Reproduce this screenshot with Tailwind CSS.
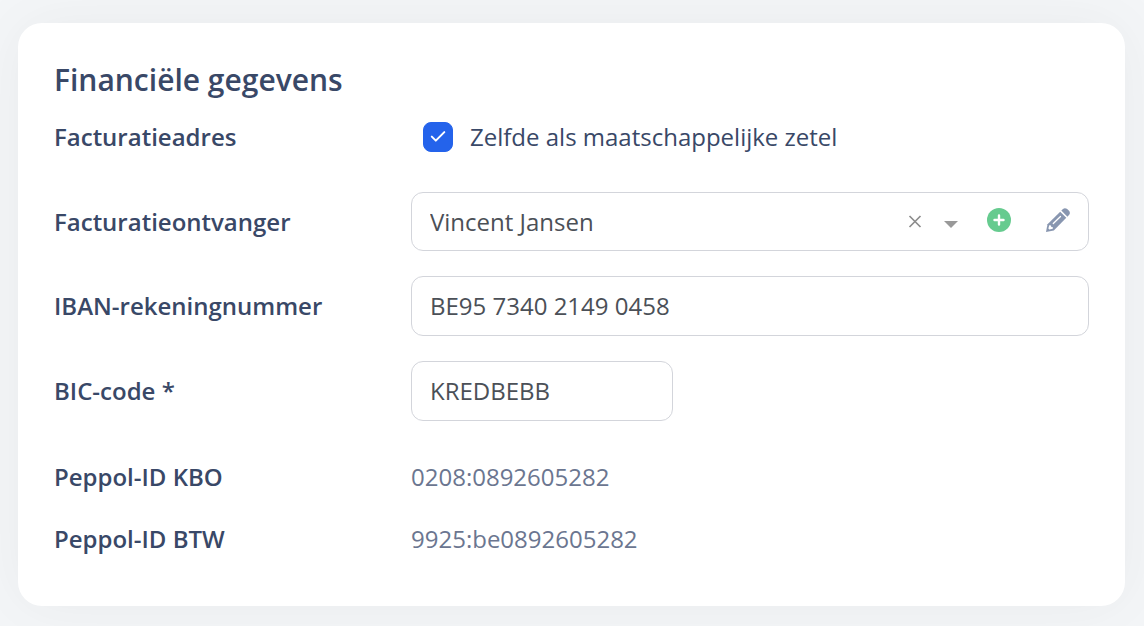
<!DOCTYPE html>
<html lang="nl">
<head>
    <meta charset="UTF-8">
    <meta name="viewport" content="width=device-width, initial-scale=1.0">
    <title>Financiële gegevens</title>
    <script src="https://cdn.jsdelivr.net/npm/@tailwindcss/browser@4"></script>
</head>
<body class="bg-[#f4f6f8] px-[18px] pt-[23px] pb-5 font-['Open_Sans',sans-serif] text-2xl text-[#394867]">
    <main class="mr-px rounded-3xl bg-white px-9 pt-9 pb-[51px] shadow-[0_0_60px_rgba(80,80,80,0.07)]">
        <h1 class="text-3xl leading-[42px] font-semibold">Financiële gegevens</h1>

        <form>
            <!-- Facturatieadres -->
            <div class="grid h-[72px] grid-cols-[357px_1fr] items-center">
                <span class="font-semibold">Facturatieadres</span>
                <label for="sameAddress" class="flex items-center pl-3">
                    <span class="relative flex">
                        <input type="checkbox" id="sameAddress" checked class="peer size-[30px] appearance-none rounded-lg border border-gray-300 checked:border-[#2463eb] checked:bg-[#2463eb]">
                        <svg class="pointer-events-none absolute inset-0 hidden size-[30px] peer-checked:block" viewBox="0 0 30 30" fill="none" stroke="white" stroke-width="2" stroke-linecap="round" stroke-linejoin="round"><path d="M8.800 14.600l4 4 8.500-8.500"/></svg>
                    </span>
                    <span class="ml-[17px]">Zelfde als maatschappelijke zetel</span>
                </label>
            </div>

            <!-- Facturatieontvanger -->
            <div class="mt-[19px] grid grid-cols-[357px_1fr] items-center">
                <label for="recipient" class="font-semibold">Facturatieontvanger</label>
                <div class="flex h-[59px] items-center rounded-xl border border-[#d3d5db] bg-white pr-[18px]">
                    <select id="recipient" class="h-full min-w-0 flex-1 appearance-none pl-[18px] text-[#4b5057] outline-none">
                        <option>Vincent Jansen</option>
                    </select>
                    <button type="button" aria-label="Wissen" class="mr-5">
                        <svg class="size-4" viewBox="0 0 16 16" fill="none" stroke="#8d8d8d" stroke-width="1.7"><path d="M2.500 2l11 11M13.500 2l-11 11"/></svg>
                    </button>
                    <svg class="mt-1 mr-7 h-4 w-4" viewBox="0 0 16 16" fill="#999"><path d="M1 5h14l-7 7z"/></svg>
                    <button type="button" aria-label="Toevoegen" class="mr-[35px] pb-1">
                        <svg class="size-6" viewBox="0 0 24 24"><circle cx="12" cy="12" r="12" fill="#66cb8f"/><path d="M12 7.500v9M7.500 12h9" fill="none" stroke="white" stroke-width="2.400" stroke-linecap="round"/></svg>
                    </button>
                    <button type="button" aria-label="Bewerken" class="pb-1">
                        <svg class="size-6" viewBox="0 0 24 24">
                            <path d="M1.500 16.200L14.200 3.700L20.300 9.800L7.800 22.400L0 24z" fill="#8896b0"/>
                            <path d="M15.300 2.600L17 1Q18.800-.5 21.200 1L23 2.800Q24.800 5 23 7L21.400 8.700z" fill="#8896b0"/>
                            <path d="M3.200 17.200L5 17.400L5.300 19L6.900 19.300L6.800 20.700L3.300 21.500L2.400 20.600z" fill="white"/>
                            <path d="M7.300 15.500L14.500 8.500" stroke="white" stroke-width="1.300" stroke-linecap="round"/>
                        </svg>
                    </button>
                </div>
            </div>

            <!-- IBAN -->
            <div class="mt-[25px] grid grid-cols-[357px_1fr] items-center">
                <label for="iban" class="font-semibold">IBAN-rekeningnummer</label>
                <input type="text" id="iban" value="BE95 7340 2149 0458" class="h-[60px] w-full rounded-xl border border-[#d3d5db] px-[18px] pb-0.5 text-[#4b5057]">
            </div>

            <!-- BIC -->
            <div class="mt-[25px] grid grid-cols-[357px_1fr] items-center">
                <label for="bic" class="font-semibold">BIC-code *</label>
                <input type="text" id="bic" value="KREDBEBB" class="h-[60px] w-[262px] rounded-xl border border-[#d3d5db] px-[18px] pb-0.5 text-[#4b5057]">
            </div>
        </form>

        <!-- Peppol -->
        <dl class="mt-10 grid grid-cols-[357px_1fr] gap-y-[30px]">
            <dt class="font-semibold">Peppol-ID KBO</dt>
            <dd class="text-[#6b7690]">0208:0892605282</dd>
            <dt class="font-semibold">Peppol-ID BTW</dt>
            <dd class="text-[#6b7690]">9925:be0892605282</dd>
        </dl>
    </main>
</body>
</html>
